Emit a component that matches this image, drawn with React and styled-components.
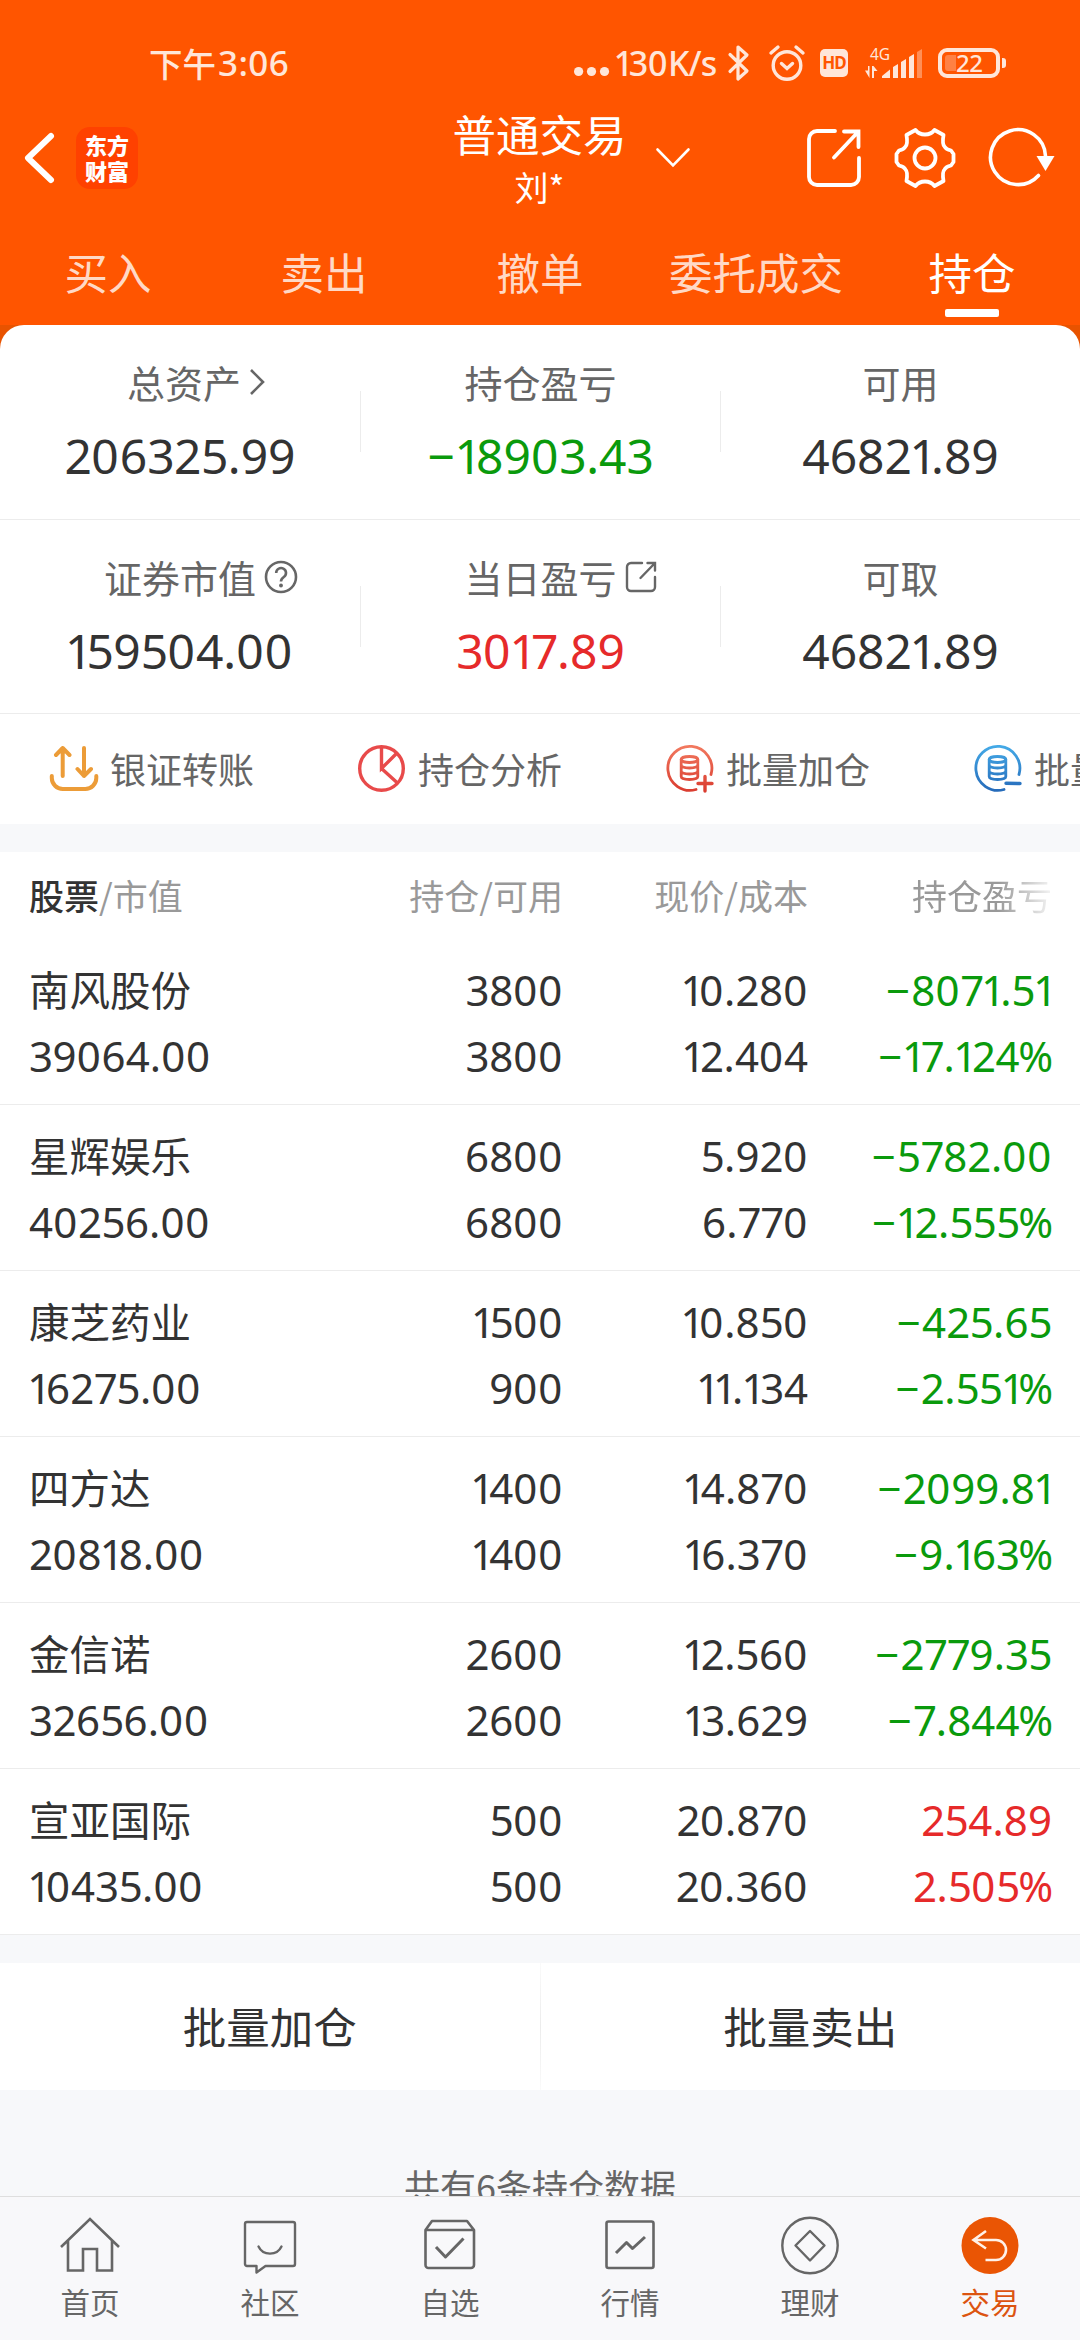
import React from "react";
import styled, { createGlobalStyle, css } from "styled-components";

const CJK = '"Noto Sans CJK SC", "Noto Sans", sans-serif';
const LATIN = '"Noto Sans", "Noto Sans CJK SC", sans-serif';

const tones = { up: "#e62a2a", down: "#0a9a0c", plain: "#333333" };

const GlobalStyle = createGlobalStyle`
  * { box-sizing: border-box; }
  body { margin: 0; background: #f7f8fa; }
  svg { display: block; flex: none; overflow: visible; }
`;

const Screen = styled.div`
  width: 1080px;
  height: 2340px;
  display: flex;
  flex-direction: column;
  overflow: hidden;
  background: #f7f8fa;
  font-family: ${CJK};
  color: #333;
`;

/* ---------- header ---------- */

const Header = styled.header`
  flex: none;
  height: 325px;
  background: #ff5500;
  color: #fff;
`;

const StatusBar = styled.div`
  height: 110px;
  padding: 16px 74px 0 149px;
  display: flex;
  align-items: center;
  justify-content: space-between;
  color: #ffe6d9;
`;

const Clock = styled.div`
  display: flex;
  align-items: center;
  font-size: 33.5px;
  font-weight: 500;
  line-height: 40px;
`;

const ClockDigits = styled.span`
  font-family: ${LATIN};
  font-size: 35px;
  margin-left: 2px;
  letter-spacing: 0.4px;
`;

const StatusIcons = styled.div`
  display: flex;
  align-items: center;
`;

const Speed = styled.span`
  font-family: ${LATIN};
  font-size: 34px;
  font-weight: 500;
  line-height: 40px;
  width: 103px;
  margin-left: 5px;
  letter-spacing: -1px;
  white-space: nowrap;
`;

const HdBadge = styled.span`
  width: 28px;
  height: 28px;
  margin-left: 15px;
  border-radius: 5px;
  background: #ffe6d9;
  color: #ff5500;
  font: 700 17px/28px ${LATIN};
  letter-spacing: -1px;
  text-align: center;
`;

const Network = styled.div`
  width: 58px;
  height: 32px;
  margin-left: 17px;
  display: flex;
  flex-direction: column;
  font: 400 15.5px/14px ${LATIN};
  padding-left: 5px;
`;

const NetworkLabel = styled.span`
  height: 14px;
`;

const NetworkBars = styled.div`
  height: 18px;
  margin-left: -5px;
`;

const Battery = styled.div`
  width: 62px;
  height: 30px;
  margin-left: 15px;
  border: 4px solid #ffe6d9;
  border-radius: 9px;
  font: 500 24px/22px ${LATIN};
  letter-spacing: -0.6px;
  display: flex;
  align-items: center;
`;

const BatteryFill = styled.span`
  width: 11px;
  height: 16px;
  margin-left: 3px;
  border-radius: 3px 0 0 3px;
  background: #ff8144;
`;

const BatteryCap = styled.span`
  width: 4px;
  height: 10px;
  margin-left: 2px;
  border-radius: 0 3px 3px 0;
  background: #ffe6d9;
`;

const TitleBar = styled.div`
  height: 110px;
  padding: 0 25px 16px 24px;
  display: grid;
  grid-template-columns: 1fr auto 1fr;
  grid-template-rows: 95px;
  align-items: center;
`;

const TitleSide = styled.div`
  display: flex;
  align-items: center;
  gap: 22px;
  ${(p) => p.$end && css`justify-content: flex-end; gap: 34px;`}
`;

const Logo = styled.div`
  width: 62px;
  height: 62px;
  border-radius: 14px;
  background: #ff4100;
  display: flex;
  flex-direction: column;
  align-items: center;
  justify-content: center;
  font-size: 22px;
  font-weight: 900;
  line-height: 26px;
  padding-bottom: 1px;
`;

const TitleBlock = styled.div`
  position: relative;
  align-self: start;
  margin-top: -2px;
  display: flex;
  flex-direction: column;
  align-items: center;
`;

const Title = styled.div`
  font-size: 43.5px;
  font-weight: 400;
  line-height: 52px;
  height: 54px;
`;

const Account = styled.div`
  font-size: 34px;
  line-height: 50px;
  height: 50px;
`;

const TitleCaret = styled.span`
  position: absolute;
  left: 203px;
  top: 40px;
`;

const Tabs = styled.nav`
  height: 105px;
  display: grid;
  grid-template-columns: repeat(5, 1fr);
`;

const Tab = styled.div`
  display: flex;
  flex-direction: column;
  align-items: center;
  padding-top: 19px;
  font-size: 43.5px;
  line-height: 66px;
  color: ${(p) => (p.$active ? "#fff" : "#ffd9c6")};
  &::after {
    content: "";
    width: 54px;
    height: 8px;
    margin-top: 4px;
    border-radius: 2px;
    background: ${(p) => (p.$active ? "#fff" : "transparent")};
  }
`;

/* ---------- summary ---------- */

const Content = styled.main`
  flex: 1;
  min-height: 0;
  overflow: hidden;
`;

const CardBacking = styled.div`
  background: linear-gradient(#e85300 0 30px, #fff 30px);
`;

const SummaryCard = styled.section`
  background: #fff;
  border-radius: 24px 24px 0 0;
`;

const SummaryRow = styled.div`
  height: 194.5px;
  display: grid;
  grid-template-columns: repeat(3, 1fr);
  align-items: center;
  border-bottom: 1px solid #ececec;
`;

const Metric = styled.div`
  display: flex;
  flex-direction: column;
  align-items: center;
  height: 100%;
  padding-top: 30px;
`;

const MetricCell = styled.div`
  height: 100%;
  display: flex;
  align-items: center;
  &:not(:first-child)::before {
    content: "";
    width: 1px;
    height: 61px;
    background: #ececec;
  }
  > div { flex: 1; }
`;

const MetricLabel = styled.div`
  position: relative;
  left: ${(p) => p.$shift || 0}px;
  font-size: 38px;
  line-height: 54px;
  color: #666;
`;

const LabelIcon = styled.span`
  position: absolute;
  left: 100%;
  top: 50%;
  transform: translateY(-50%);
  margin-left: 8px;
`;

const MetricValue = styled.div`
  margin-top: 14px;
  font-family: ${LATIN};
  font-size: 48px;
  line-height: 66px;
  color: ${(p) => tones[p.$tone]};
`;

/* One glyph of a proportional figure, with its own side spacing. */
const Glyph = styled.span`
  margin-left: ${(p) => p.$before}em;
  letter-spacing: ${(p) => p.$after}em;
`;

const Tools = styled.div`
  height: 110px;
  display: flex;
  overflow: hidden;
`;

const Tool = styled.div`
  flex: none;
  width: 308px;
  padding-left: 50px;
  display: flex;
  align-items: center;
  gap: 12px;
  font-size: 36px;
  line-height: 40px;
  color: #666;
  white-space: nowrap;
`;

const ToolText = styled.span`
  padding-bottom: 3px;
`;

const Gap = styled.div`
  height: ${(p) => p.$h}px;
`;

/* ---------- holdings ---------- */

const Holdings = styled.section`
  background: #fff;
`;

const columns = css`
  display: grid;
  grid-template-columns: 304px 230px 245px 244px;
  padding: 0 28px 0 29px;
`;

const HoldingsHead = styled.div`
  ${columns}
  height: 87px;
  align-items: center;
  font-size: 35px;
  line-height: 40px;
  color: #999;
  padding-bottom: 2px;
`;

const HeadCell = styled.div`
  text-align: ${(p) => (p.$first ? "left" : "right")};
  white-space: nowrap;
  ${(p) =>
    p.$fade &&
    css`
      -webkit-mask-image: linear-gradient(90deg, #000 190px, rgba(0, 0, 0, 0.1) 244px);
      mask-image: linear-gradient(90deg, #000 190px, rgba(0, 0, 0, 0.1) 244px);
    `}
  b { font-weight: 500; color: #333; }
`;

const Row = styled.div`
  ${columns}
  height: 166px;
  padding-top: 18px;
  border-bottom: 1px solid #ececec;
`;

const Cell = styled.div`
  display: flex;
  flex-direction: column;
  align-items: ${(p) => (p.$first ? "flex-start" : "flex-end")};
  color: ${(p) => tones[p.$tone || "plain"]};
`;

const Figure = styled.div`
  font-family: ${LATIN};
  font-size: 42px;
  line-height: 66px;
  height: 66px;
  letter-spacing: 0.1px;
  white-space: nowrap;
`;

const StockName = styled.div`
  font-size: 40.5px;
  line-height: 64px;
  height: 66px;
`;

const Actions = styled.div`
  height: 127px;
  display: flex;
  align-items: center;
  background: #fff;
`;

const ActionDivider = styled.div`
  width: 1px;
  height: 100%;
  background: linear-gradient(#fafafa, #ececec 50%, #fafafa);
`;

const Action = styled.div`
  flex: 1;
  text-align: center;
  font-size: 43.5px;
  line-height: 60px;
  padding-bottom: 2px;
`;

const CountNote = styled.div`
  padding-top: 70px;
  text-align: center;
  font-size: 36px;
  line-height: 50px;
  color: #666;
`;

/* ---------- bottom bar ---------- */

const BottomBar = styled.nav`
  flex: none;
  height: 144px;
  border-top: 1px solid #dedede;
  background: #f8f8fa;
  display: grid;
  grid-template-columns: repeat(6, 1fr);
`;

const BottomItem = styled.div`
  display: flex;
  flex-direction: column;
  align-items: center;
  padding-top: 18px;
  font-size: 29.5px;
  line-height: 40px;
  color: ${(p) => (p.$active ? "#dc5410" : "#666")};
`;

const BottomLabel = styled.span`
  margin-top: 4px;
`;

/* ---------- icons ---------- */

const Line = ({ w, h, sw = 3, children, ...rest }) => (
  <svg width={w} height={h} viewBox={`0 0 ${w} ${h}`} fill="none" stroke="currentColor" strokeWidth={sw} {...rest}>
    {children}
  </svg>
);

const BackIcon = () => (
  <Line w={30} h={50} sw={6} strokeLinecap="round" strokeLinejoin="round">
    <path d="M27 3 4 25 27 47" />
  </Line>
);

const CaretIcon = () => (
  <Line w={34} h={20} sw={2.6} strokeLinecap="round">
    <path d="M1.5 1.5 17 17.5 32.5 1.5" />
  </Line>
);

const ShareIcon = () => (
  <Line w={54} h={58} sw={3.8} strokeLinecap="round">
    <path d="M28 2H10a8 8 0 0 0-8 8v38a8 8 0 0 0 8 8h34a8 8 0 0 0 8-8V29" />
    <path d="M37 2.500H51.500V18M51.500 2.500 27 28.500" />
  </Line>
);

const GearIcon = () => (
  <Line w={60} h={60} sw={3.8} strokeLinejoin="round">
    <g transform="translate(30 30)">
      <circle r="10.500" />
      <path d="M-9.500-28Q-6-23.500 0-23.500T9.500-28L18.500-23Q17-14 19.500-11.500 21-8.500 26-7.500L28.500-4V4L26 7.500Q21 8.500 19.500 11.500 17 14 18.500 23L9.500 28Q6 23.500 0 23.500T-9.500 28L-18.500 23Q-17 14-19.500 11.500-21 8.500-26 7.500L-28.500 4V-4L-26-7.500Q-21-8.500-19.500-11.500-17-14-18.500-23Z" />
    </g>
  </Line>
);

const RefreshIcon = () => (
  <Line w={66} h={60} sw={3.6} strokeLinecap="round">
    <path d="M49.500 47.500A27.500 27.500 0 1 1 56.500 28" />
    <path d="M47.500 28H65.500L56.500 43Z" fill="currentColor" stroke="none" />
  </Line>
);

const DotsIcon = () => (
  <svg width="36" height="30" fill="currentColor">
    <circle cx="4.600" cy="23.500" r="4.600" />
    <circle cx="17.500" cy="23.500" r="4.600" />
    <circle cx="30.500" cy="23.500" r="4.600" />
  </svg>
);

const BluetoothIcon = () => (
  <Line w={22} h={36} sw={3.2} strokeLinejoin="round" strokeLinecap="round" style={{ marginLeft: 10 }}>
    <path d="M2 9.500 19 26 10 34V2l9 8L2 26.500" />
  </Line>
);

const AlarmIcon = () => (
  <Line w={36} h={36} sw={3.4} strokeLinecap="round" style={{ marginLeft: 19 }}>
    <circle cx="18" cy="20.500" r="13.800" />
    <path d="M12.500 18.500 18 23.500 23.500 18.500M2 8 9 2M34 8 27 2" />
  </Line>
);

const SignalIcon = () => (
  <svg width="58" height="17" viewBox="0 0 58 17" fill="currentColor">
    <path d="M0 9.500 3 9.500V5H4.500V17ZM7 5H8.500L12.500 10H9V17H7ZM17 15 25 8.500V17H17Z" />
    <path d="M28 6 33 3V17H28ZM36 1 41-2V17H36ZM44-4 49-7V17H44Z" />
    <path d="M52-9 57-12V17H52Z" opacity=".4" />
  </svg>
);

const ChevronIcon = () => (
  <Line w={16} h={28} sw={2.6}>
    <path d="M2 2 14 14 2 26" />
  </Line>
);

const HelpIcon = () => (
  <Line w={34} h={34} sw={2.6}>
    <circle cx="17" cy="17" r="15" />
    <path d="M12.200 13a4.900 4.900 0 1 1 7.600 4c-2 1.400-2.800 2.300-2.800 4.500" />
    <circle cx="17" cy="25.500" r="1.900" fill="currentColor" stroke="none" />
  </Line>
);

const OpenIcon = () => (
  <Line w={32} h={32} sw={2.4} strokeLinecap="round">
    <path d="M17 2H6a4 4 0 0 0-4 4v20a4 4 0 0 0 4 4h20a4 4 0 0 0 4-4V16" />
    <path d="M22.500 2H30V9.500M30 2 15.500 17" />
  </Line>
);

const TransferIcon = () => (
  <Line w={48} h={48} sw={4} stroke="#ec9c38" strokeLinecap="round" strokeLinejoin="round">
    <path d="M12.700 31V3M6 10 12.700 3 19.500 10M34 3V31M27.500 24 34 31 41 24" />
    <path d="M1.800 31v2a11 11 0 0 0 11 11h22.500a11 11 0 0 0 11-11v-2" />
  </Line>
);

const PieIcon = () => (
  <Line w={48} h={48} sw={3.4} stroke="#e84a4a">
    <circle cx="23.500" cy="23.500" r="21.800" />
    <path d="M23.500 2V23.500L39 8M23.500 23.500 39.500 38" />
  </Line>
);

const BatchIcon = ({ id, from, to, plus }) => (
  <Line w={48} h={48} sw={2.8} stroke={`url(#${id})`} strokeLinecap="round">
    <defs>
      <linearGradient id={id} gradientUnits="userSpaceOnUse" x1="24" y1="0" x2="24" y2="48">
        <stop offset="0" stopColor={from} />
        <stop offset="1" stopColor={to} />
      </linearGradient>
    </defs>
    <path d="M45 29.500A22 22 0 1 0 30 44.500" />
    <ellipse cx="23.500" cy="14.500" rx="8.300" ry="3" />
    <path d="M15.200 14.500v17c0 4 16.600 4 16.600 0v-17M15.200 20c0 4 16.600 4 16.600 0M15.200 26c0 4 16.600 4 16.600 0" />
    <path d={plus ? "M32 38.500H46M39 31.500V46" : "M32 38.300 46 38.500"} strokeWidth="3.400" />
  </Line>
);

const HomeIcon = () => (
  <Line w={60} h={62} sw={2.6}>
    <path d="M1 32 30 4 59 32M8 26V55.500H23V34H37V55.500H52V26" />
  </Line>
);

const CommunityIcon = () => (
  <Line w={60} h={62} sw={2.4} strokeLinejoin="round" strokeLinecap="round">
    <path d="M7 7H53a2 2 0 0 1 2 2V49a2 2 0 0 1-2 2H25.500L16.500 57.500V51H7a2 2 0 0 1-2-2V9a2 2 0 0 1 2-2Z" />
    <path d="M18.500 31.500c4.500 9.500 18.500 9.500 23 0" />
  </Line>
);

const WatchlistIcon = () => (
  <Line w={60} h={62} sw={2.6} strokeLinejoin="round">
    <path d="M5.500 15 12 6H47L54 15V50a3 3 0 0 1-3 3H8.500a3 3 0 0 1-3-3ZM5.500 15H54" />
    <path d="M16 32 25.500 42 43.500 23.500" strokeWidth="3" />
  </Line>
);

const MarketIcon = () => (
  <Line w={60} h={62} sw={2.6} strokeLinejoin="round">
    <rect x="6.500" y="6.500" width="47" height="46.500" rx="2" />
    <path d="M16 38 26.500 27.500 32.500 33.500 45 22" strokeWidth="3" />
  </Line>
);

const WealthIcon = () => (
  <Line w={60} h={62} sw={2.4} strokeLinejoin="round">
    <circle cx="30" cy="30.500" r="27.700" />
    <path d="M30 16 44.500 30.500 30 45.500 15.500 30.500Z" />
  </Line>
);

const TradeIcon = () => (
  <svg width="60" height="62" viewBox="0 0 60 62" fill="none">
    <circle cx="30" cy="30.500" r="28.500" fill="#ea5504" />
    <path d="M26 16 13.500 25 26 33.500M13.500 25H36a10 10 0 0 1 0 20H25.500" stroke="#fff1e8" strokeWidth="2.600" />
  </svg>
);

/* ---------- data ---------- */

const tabs = ["买入", "卖出", "撤单", "委托成交", "持仓"];

const summary = [
  [
    { label: "总资产", value: "206325.99", icon: <ChevronIcon />, shift: 4 },
    { label: "持仓盈亏", value: "−18903.43", tone: "down" },
    { label: "可用", value: "46821.89" },
  ],
  [
    { label: "证券市值", value: "159504.00", icon: <HelpIcon /> },
    { label: "当日盈亏", value: "3017.89", tone: "up", icon: <OpenIcon /> },
    { label: "可取", value: "46821.89" },
  ],
];

const tools = [
  { text: "银证转账", icon: <TransferIcon /> },
  { text: "持仓分析", icon: <PieIcon /> },
  { text: "批量加仓", icon: <BatchIcon id="buy" from="#f27a60" to="#d93a2e" plus /> },
  { text: "批量卖出", icon: <BatchIcon id="sell" from="#45abe8" to="#2468b8" /> },
];

const holdings = [
  ["南风股份", "39064.00", "3800", "3800", "10.280", "12.404", "−8071.51", "−17.124%"],
  ["星辉娱乐", "40256.00", "6800", "6800", "5.920", "6.770", "−5782.00", "−12.555%"],
  ["康芝药业", "16275.00", "1500", "900", "10.850", "11.134", "−425.65", "−2.551%"],
  ["四方达", "20818.00", "1400", "1400", "14.870", "16.370", "−2099.81", "−9.163%"],
  ["金信诺", "32656.00", "2600", "2600", "12.560", "13.629", "−2779.35", "−7.844%"],
  ["宣亚国际", "10435.00", "500", "500", "20.870", "20.360", "254.89", "2.505%"],
];

const bottomItems = [
  ["首页", <HomeIcon />],
  ["社区", <CommunityIcon />],
  ["自选", <WatchlistIcon />],
  ["行情", <MarketIcon />],
  ["理财", <WealthIcon />],
  ["交易", <TradeIcon />],
];

/* Space before and after each glyph, in em: a narrow one, a wide zero. */
const spacing = {
  0: [0, 0.02],
  1: [-0.04, -0.125],
  2: [0, -0.012],
  3: [0, -0.012],
  5: [0, -0.015],
  7: [0, -0.03],
  "%": [-0.03, -0.03],
  "−": [0, 0.03],
};

const Digits = ({ text }) =>
  text.split("").map((c, i) =>
    spacing[c] ? (
      <Glyph key={i} $before={spacing[c][0]} $after={spacing[c][1]}>{c}</Glyph>
    ) : (
      c
    )
  );

export default function App() {
  return (
    <Screen>
      <GlobalStyle />
      <Header>
        <StatusBar>
          <Clock>
            下午<ClockDigits>3:06</ClockDigits>
          </Clock>
          <StatusIcons>
            <DotsIcon />
            <Speed><Digits text="130K/s" /></Speed>
            <BluetoothIcon />
            <AlarmIcon />
            <HdBadge>HD</HdBadge>
            <Network>
              <NetworkLabel>4G</NetworkLabel>
              <NetworkBars><SignalIcon /></NetworkBars>
            </Network>
            <Battery>
              <BatteryFill />
              22
            </Battery>
            <BatteryCap />
          </StatusIcons>
        </StatusBar>
        <TitleBar>
          <TitleSide>
            <BackIcon />
            <Logo>
              <span>东方</span>
              <span>财富</span>
            </Logo>
          </TitleSide>
          <TitleBlock>
            <Title>普通交易</Title>
            <Account>刘*</Account>
            <TitleCaret><CaretIcon /></TitleCaret>
          </TitleBlock>
          <TitleSide $end>
            <ShareIcon />
            <GearIcon />
            <RefreshIcon />
          </TitleSide>
        </TitleBar>
        <Tabs>
          {tabs.map((t, i) => (
            <Tab key={t} $active={i === 4}>{t}</Tab>
          ))}
        </Tabs>
      </Header>

      <Content>
        <CardBacking>
          <SummaryCard>
            {summary.map((row, r) => (
              <SummaryRow key={r}>
                {row.map((m) => (
                  <MetricCell key={m.label}>
                    <Metric>
                      <MetricLabel $shift={m.shift}>
                        {m.label}
                        {m.icon && <LabelIcon>{m.icon}</LabelIcon>}
                      </MetricLabel>
                      <MetricValue $tone={m.tone || "plain"}>
                        <Digits text={m.value} />
                      </MetricValue>
                    </Metric>
                  </MetricCell>
                ))}
              </SummaryRow>
            ))}
            <Tools>
              {tools.map((t) => (
                <Tool key={t.text}>
                  {t.icon}
                  <ToolText>{t.text}</ToolText>
                </Tool>
              ))}
            </Tools>
          </SummaryCard>
        </CardBacking>

        <Gap $h={28} />

        <Holdings>
          <HoldingsHead>
            <HeadCell $first><b>股票</b>/市值</HeadCell>
            <HeadCell>持仓/可用</HeadCell>
            <HeadCell>现价/成本</HeadCell>
            <HeadCell $fade>持仓盈亏</HeadCell>
          </HoldingsHead>
          {holdings.map(([name, value, held, usable, price, cost, gain, rate]) => (
            <Row key={name}>
              <Cell $first>
                <StockName>{name}</StockName>
                <Figure><Digits text={value} /></Figure>
              </Cell>
              <Cell>
                <Figure><Digits text={held} /></Figure>
                <Figure><Digits text={usable} /></Figure>
              </Cell>
              <Cell>
                <Figure><Digits text={price} /></Figure>
                <Figure><Digits text={cost} /></Figure>
              </Cell>
              <Cell $tone={gain.startsWith("−") ? "down" : "up"}>
                <Figure><Digits text={gain} /></Figure>
                <Figure><Digits text={rate} /></Figure>
              </Cell>
            </Row>
          ))}
        </Holdings>

        <Gap $h={28} />

        <Actions>
          <Action>批量加仓</Action>
          <ActionDivider />
          <Action>批量卖出</Action>
        </Actions>

        <CountNote>共有6条持仓数据</CountNote>
      </Content>

      <BottomBar>
        {bottomItems.map(([label, icon], i) => (
          <BottomItem key={label} $active={i === 5}>
            {icon}
            <BottomLabel>{label}</BottomLabel>
          </BottomItem>
        ))}
      </BottomBar>
    </Screen>
  );
}
